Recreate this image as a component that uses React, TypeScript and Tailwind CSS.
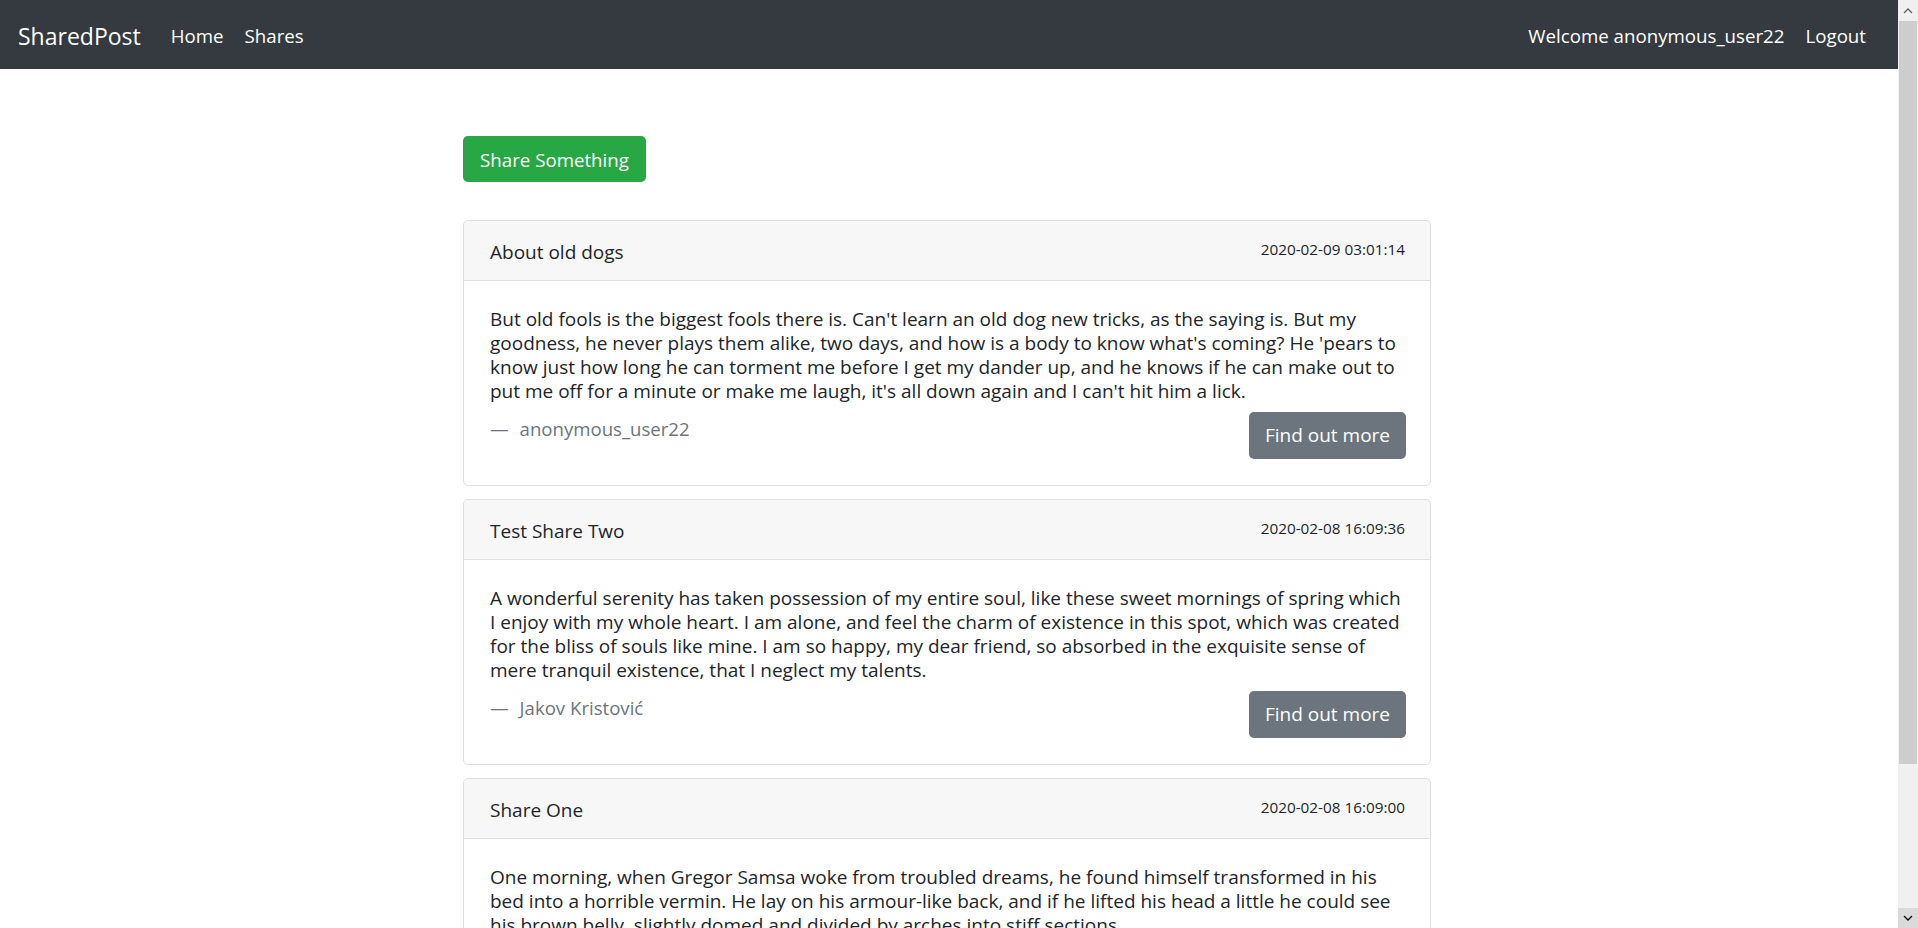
import React from 'react';

type Share = {
  title: string;
  date: string;
  body: string;
  author: string;
};

const shares: Share[] = [
  {
    title: 'About old dogs',
    date: '2020-02-09 03:01:14',
    body: "But old fools is the biggest fools there is. Can't learn an old dog new tricks, as the saying is. But my goodness, he never plays them alike, two days, and how is a body to know what's coming? He 'pears to know just how long he can torment me before I get my dander up, and he knows if he can make out to put me off for a minute or make me laugh, it's all down again and I can't hit him a lick.",
    author: 'anonymous_user22',
  },
  {
    title: 'Test Share Two',
    date: '2020-02-08 16:09:36',
    body: 'A wonderful serenity has taken possession of my entire soul, like these sweet mornings of spring which I enjoy with my whole heart. I am alone, and feel the charm of existence in this spot, which was created for the bliss of souls like mine. I am so happy, my dear friend, so absorbed in the exquisite sense of mere tranquil existence, that I neglect my talents.',
    author: 'Jakov Kristović',
  },
  {
    title: 'Share One',
    date: '2020-02-08 16:09:00',
    body: 'One morning, when Gregor Samsa woke from troubled dreams, he found himself transformed in his bed into a horrible vermin. He lay on his armour-like back, and if he lifted his head a little he could see his brown belly, slightly domed and divided by arches into stiff sections.',
    author: 'anonymous_user22',
  },
];

const ShareCard: React.FC<{ share: Share }> = ({ share }) => (
  <div className="mb-[13px] rounded-[5px] border border-[#dfdfdf] bg-white">
    <div className="flex h-[60px] items-center justify-between rounded-t-[5px] border-b border-[#dfdfdf] bg-[#f7f7f7] pl-[26px] pr-[25px]">
      <span className="mt-[4px] text-[19px] text-[#212529]">{share.title}</span>
      <span className="mb-[3px] text-[15.3px] text-[#212529]">{share.date}</span>
    </div>
    <div className="pb-[26px] pl-[26px] pr-[24px] pt-[26px]">
      <p className="mb-[9px] text-[19px] leading-[24px] text-[#212529]">{share.body}</p>
      <div className="flex items-start justify-between">
        <div className="mt-[5px] text-[18.6px] leading-[24px] text-[#6c757d]">
          <span className="mr-[11px]">—</span>
          {share.author}
        </div>
        <button className="h-[47px] w-[157px] rounded-[5px] bg-[#6c757d] text-[19px] text-white">
          Find out more
        </button>
      </div>
    </div>
  </div>
);

export default function App() {
  return (
    <div className="flex h-[928px] w-full overflow-hidden bg-white font-['Open_Sans',sans-serif]">
      <div className="flex-1 overflow-hidden">
        <nav className="flex h-[69px] items-center justify-between bg-[#343a40] pl-[18px] pr-[32px] text-white">
          <div className="mt-[3px] flex items-center">
            <span className="mr-[30px] text-[23px]">SharedPost</span>
            <a className="mr-[21px] mt-[1px] text-[18.7px]">Home</a>
            <a className="mt-[1px] text-[18.7px]">Shares</a>
          </div>
          <div className="mt-[4px] flex items-center text-[18.7px]">
            <span className="mr-[21px]">Welcome anonymous_user22</span>
            <a>Logout</a>
          </div>
        </nav>
        <div className="pr-[4px]">
          <div className="mx-auto w-[968px] pt-[67px]">
            <button className="h-[46px] w-[183px] rounded-[5px] bg-[#28a745] text-[18.7px] text-white">
              <span className="relative top-[1px]">Share Something</span>
            </button>
            <div className="mt-[38px]">
              {shares.map((s) => (
                <ShareCard key={s.title} share={s} />
              ))}
            </div>
          </div>
        </div>
      </div>
      <div className="flex w-[20px] flex-col bg-[#f0f0f0]">
        <div className="flex h-[21px] items-center justify-center">
          <svg width="10" height="6" viewBox="0 0 10 6">
            <path d="M1 5 L5 1 L9 5" stroke="#606060" strokeWidth="1.3" fill="none" />
          </svg>
        </div>
        <div className="mx-[1px] h-[743px] bg-[#cdcdcd]" />
        <div className="flex-1" />
        <div className="flex h-[20px] items-center justify-center bg-[#dadada]">
          <svg width="10" height="6" viewBox="0 0 10 6">
            <path d="M1 1 L5 5 L9 1" stroke="#000" strokeWidth="1.3" fill="none" />
          </svg>
        </div>
      </div>
    </div>
  );
}
